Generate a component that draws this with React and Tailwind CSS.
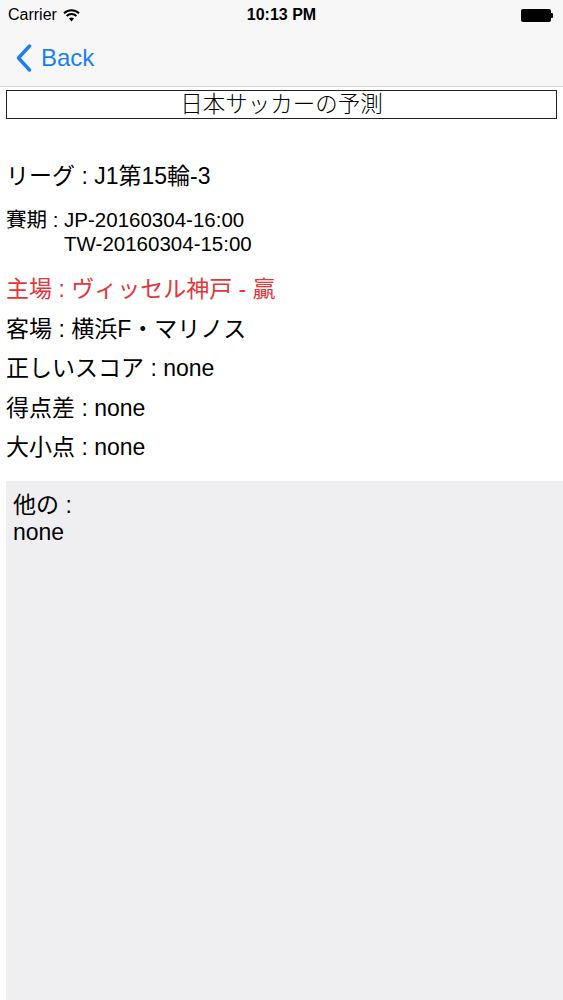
import React from 'react';

const rows = [
  { label: '主場', value: 'ヴィッセル神戸 - 贏', red: true },
  { label: '客場', value: '横浜F・マリノス' },
  { label: '正しいスコア', value: 'none' },
  { label: '得点差', value: 'none' },
  { label: '大小点', value: 'none' },
];

const App = () => {
  return (
    <div
      className="w-[563px] h-[1000px] bg-white flex flex-col overflow-hidden text-black"
      style={{ fontFamily: '"Liberation Sans", "Noto Sans CJK JP", sans-serif' }}
    >
      {/* Status bar + nav bar */}
      <div className="bg-[#f7f7f8] border-b border-[#d6d6d8]">
        <div className="h-[30px] px-[8px] flex items-center justify-between text-[16px]">
          <div className="flex items-center gap-[6px] w-[120px]">
            <span>Carrier</span>
            <svg width="17" height="13" viewBox="0 0 17 13">
              <path d="M8.5 12.5 L6 9.6 A3.6 3.6 0 0 1 11 9.6 Z" fill="#000" />
              <path d="M3.6 7 A7 7 0 0 1 13.4 7" stroke="#000" strokeWidth="2" fill="none" />
              <path d="M1 4.2 A11 11 0 0 1 16 4.2" stroke="#000" strokeWidth="2" fill="none" />
            </svg>
          </div>
          <span className="font-bold">10:13 PM</span>
          <div className="w-[120px] flex justify-end pr-[2px]">
            <div className="flex items-center">
              <div className="w-[30px] h-[13px] bg-black rounded-[2px]" />
              <div className="w-[2px] h-[5px] bg-black rounded-r-[1px]" />
            </div>
          </div>
        </div>
        <div className="h-[56px] flex items-center pl-[16px]">
          <svg width="16" height="28" viewBox="0 0 16 28" className="mr-[9px]">
            <path d="M13.5 2 L2.5 14 L13.5 26" stroke="#1a7ff5" strokeWidth="3.4" fill="none" strokeLinecap="round" strokeLinejoin="round" />
          </svg>
          <span className="text-[#1a7ff5] text-[24px]">Back</span>
        </div>
      </div>

      {/* Title */}
      <div className="mx-[6px] mt-[3px] h-[29px] border border-[#222] flex items-center justify-center text-[22.5px] font-light">
        日本サッカーの予測
      </div>

      {/* League */}
      <div className="pl-[6px] mt-[44px] text-[23px] leading-[26px]">リーグ : J1第15輪-3</div>

      {/* Date */}
      <div className="pl-[6px] mt-[19px] text-[20.5px] leading-[24px] flex">
        <span>賽期 :&nbsp;</span>
        <div className="flex flex-col">
          <span>JP-20160304-16:00</span>
          <span>TW-20160304-15:00</span>
        </div>
      </div>

      {/* Rows */}
      <div className="pl-[6px] mt-[20px] flex flex-col gap-[13.5px]">
        {rows.map((r) => (
          <div
            key={r.label}
            className={r.red ? 'text-[23px] leading-[26px] text-[#e4363a]' : 'text-[23px] leading-[26px]'}
          >
            {r.label} : {r.value}
          </div>
        ))}
      </div>

      {/* Other */}
      <div className="ml-[6px] mt-[21px] flex-1 bg-[#efeff1] px-[7px] pt-[11px] text-[23px] leading-[27px]">
        <div>他の :</div>
        <div>none</div>
      </div>
    </div>
  );
};

export default App;
